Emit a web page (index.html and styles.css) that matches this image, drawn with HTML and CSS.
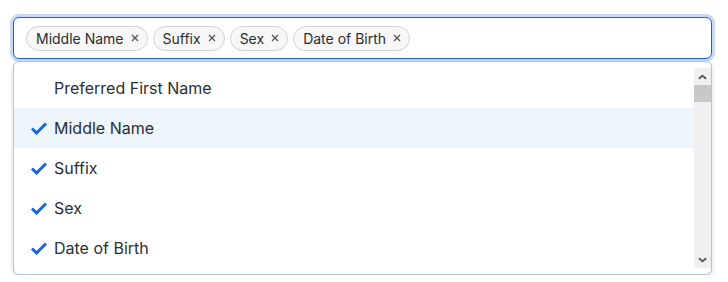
FILE: index.html
```html
<!DOCTYPE html>
<html lang="en">
<head>
    <meta charset="UTF-8">
    <meta name="viewport" content="width=device-width, initial-scale=1.0">
    <title>Field Picker</title>
    <link rel="stylesheet" href="styles.css">
</head>
<body>

    <div class="picker">
        <div class="picker-input">
            <span class="tag">Middle Name <svg class="tag-x" viewBox="0 0 8 8"><path d="M1 1L7 7M7 1L1 7"/></svg></span>
            <span class="tag">Suffix <svg class="tag-x" viewBox="0 0 8 8"><path d="M1 1L7 7M7 1L1 7"/></svg></span>
            <span class="tag">Sex <svg class="tag-x" viewBox="0 0 8 8"><path d="M1 1L7 7M7 1L1 7"/></svg></span>
            <span class="tag">Date of Birth <svg class="tag-x" viewBox="0 0 8 8"><path d="M1 1L7 7M7 1L1 7"/></svg></span>
        </div>

        <div class="dropdown">
            <ul class="options">
                <li class="option">Preferred First Name</li>
                <li class="option selected active"><svg class="check" viewBox="0 0 18 14"><path d="M2 7.5L6.5 12L16 2.5"/></svg>Middle Name</li>
                <li class="option selected"><svg class="check" viewBox="0 0 18 14"><path d="M2 7.5L6.5 12L16 2.5"/></svg>Suffix</li>
                <li class="option selected"><svg class="check" viewBox="0 0 18 14"><path d="M2 7.5L6.5 12L16 2.5"/></svg>Sex</li>
                <li class="option selected"><svg class="check" viewBox="0 0 18 14"><path d="M2 7.5L6.5 12L16 2.5"/></svg>Date of Birth</li>
            </ul>
            <div class="scrollbar">
                <div class="scroll-btn"><svg viewBox="0 0 10 6"><path d="M1 5L5 1.5L9 5"/></svg></div>
                <div class="scroll-track"><div class="scroll-thumb"></div></div>
                <div class="scroll-btn"><svg viewBox="0 0 10 6"><path d="M1 1L5 4.5L9 1"/></svg></div>
            </div>
        </div>
    </div>

</body>
</html>
```

FILE: styles.css
```css
body {
    font-family: Inter, "Noto Sans", sans-serif;
    background-color: #ffffff;
    color: #2b2f36;
    margin: 0;
    padding: 17px 16px 0 13px;
}

.picker {
    width: 699px;
}

.picker-input {
    display: flex;
    align-items: center;
    gap: 5px;
    height: 42px;
    box-sizing: border-box;
    padding: 0 12px;
    border: 1px solid #1d60d8;
    border-radius: 6px;
    background-color: #fff;
    box-shadow: 0 0 0 3px #c7d9f5;
}

.tag {
    display: inline-flex;
    align-items: center;
    gap: 7px;
    height: 25px;
    box-sizing: border-box;
    padding: 0 8px 0 9px;
    border: 1px solid #d2d2d2;
    border-radius: 13px;
    background-color: #f7f7f7;
    font-size: 14px;
    color: #2a2d33;
}

.tag-x {
    width: 8px;
    height: 8px;
    fill: none;
    stroke: #555;
    stroke-width: 1.3;
}

.dropdown {
    display: flex;
    margin-top: 2px;
    padding: 6px 0;
    border: 1px solid #b3c3d6;
    border-radius: 6px;
    background-color: #fff;
    box-shadow: 0 2px 5px rgba(0, 0, 0, 0.14);
}

.options {
    flex: 1;
    list-style: none;
    margin: 0;
    padding: 0;
    height: 200px;
    overflow: hidden;
}

.option {
    display: flex;
    align-items: center;
    height: 40px;
    padding-left: 40px;
    font-size: 16px;
    color: #2b2f36;
}

.option.selected {
    padding-left: 16px;
}

.option.active {
    background-color: #eef6fb;
}

.check {
    width: 18px;
    height: 14px;
    margin-right: 6px;
    fill: none;
    stroke: #1a64dc;
    stroke-width: 3;
}

.scrollbar {
    display: flex;
    flex-direction: column;
    width: 17px;
    height: 200px;
    background-color: #f0f0f0;
}

.scroll-btn {
    display: flex;
    align-items: center;
    justify-content: center;
    height: 17px;
}

.scroll-btn svg {
    width: 9px;
    height: 6px;
    fill: none;
    stroke: #555;
    stroke-width: 2;
}

.scroll-track {
    flex: 1;
}

.scroll-thumb {
    height: 17px;
    background-color: #c8c8c8;
}
```
